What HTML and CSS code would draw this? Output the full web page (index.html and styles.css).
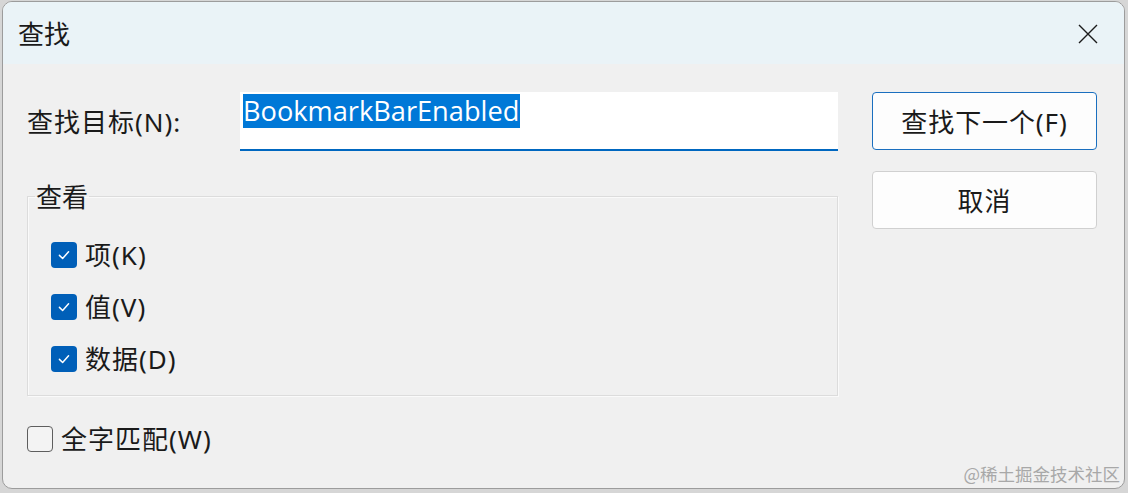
FILE: index.html
```html
<!DOCTYPE html>
<html lang="zh-CN">
<head>
<meta charset="utf-8">
<title>查找</title>
<link rel="stylesheet" href="styles.css">
</head>
<body>
<div class="window">
  <div class="titlebar">
    <span class="title">查找</span>
    <svg class="close" width="20" height="20" viewBox="0 0 20 20"><path d="M1 1 L19 19 M19 1 L1 19" stroke="#1b1b1b" stroke-width="1.4" fill="none"/></svg>
  </div>
  <div class="content">
    <div class="main">
      <div class="find-row">
        <span class="label">查找目标(N):</span>
        <div class="input"><span class="sel">BookmarkBarEnabled</span></div>
      </div>
      <fieldset class="group">
        <legend class="legend">查看</legend>
        <div class="check-row"><span class="box checked"><svg width="14" height="14" viewBox="0 0 14 14"><path d="M3 7.3 L5.8 10 L11 4.2" stroke="#fff" stroke-width="1.3" fill="none" stroke-linecap="round" stroke-linejoin="round"/></svg></span><span class="text">项(K)</span></div>
        <div class="check-row"><span class="box checked"><svg width="14" height="14" viewBox="0 0 14 14"><path d="M3 7.3 L5.8 10 L11 4.2" stroke="#fff" stroke-width="1.3" fill="none" stroke-linecap="round" stroke-linejoin="round"/></svg></span><span class="text">值(V)</span></div>
        <div class="check-row"><span class="box checked"><svg width="14" height="14" viewBox="0 0 14 14"><path d="M3 7.3 L5.8 10 L11 4.2" stroke="#fff" stroke-width="1.3" fill="none" stroke-linecap="round" stroke-linejoin="round"/></svg></span><span class="text">数据(D)</span></div>
      </fieldset>
      <div class="check-row whole"><span class="box"></span><span class="text">全字匹配(W)</span></div>
    </div>
    <div class="buttons">
      <div class="btn primary">查找下一个(F)</div>
      <div class="btn">取消</div>
    </div>
  </div>
  <div class="watermark">@稀土掘金技术社区</div>
</div>
</body>
</html>
```

FILE: styles.css
```css
* { box-sizing: border-box; }
html, body { margin: 0; height: 100%; }
body {
  background: #d6d6d6;
  padding: 1px 3px 4px 2px;
  font-family: "Noto Sans", "Noto Sans CJK SC", sans-serif;
  color: #1a1a1a;
}
.window {
  position: relative;
  height: 488px;
  border: 1px solid #9c9c9c;
  border-radius: 10px;
  background: #f0f0f0;
  overflow: hidden;
  display: flex;
  flex-direction: column;
}
.titlebar {
  height: 62px;
  background: #eaf3f7;
  display: flex;
  align-items: center;
  justify-content: space-between;
  padding: 0 26px 0 15px;
}
.title {
  font-size: 26px;
  line-height: 30px;
  font-family: "Noto Sans CJK SC", sans-serif;
}
.close { display: block; margin-top: 2px; }
.content {
  display: flex;
  padding: 28px 26px 0 24px;
  gap: 34px;
}
.main { width: 811px; display: flex; flex-direction: column; }
.find-row { display: flex; align-items: center; }
.label {
  width: 213px;
  font-size: 26px;
  letter-spacing: 1px;
  font-family: "Noto Sans", "Noto Sans CJK SC", sans-serif;
  margin-top: -2px;
}
.input {
  width: 598px;
  height: 59px;
  background: #fff;
  border-bottom: 2px solid #0067c0;
  padding: 2px 0 0 3px;
}
.sel {
  display: inline-block;
  background: #0078d7;
  color: #fff;
  font-size: 27.2px;
  line-height: 34px;
  height: 34px;
  font-family: "Open Sans", "Noto Sans", sans-serif;
  letter-spacing: 0;
  padding-right: 1px;
}
.group {
  margin: 30px 0 0 0;
  padding: 18px 0 0 23px;
  height: 215px;
  border: 1px solid #dcdcdc;
  box-shadow: inset 1px 1px 0 #fafafa, 1px 1px 0 #fafafa;
  min-width: 0;
}
.legend {
  font-size: 26px;
  font-family: "Noto Sans CJK SC", sans-serif;
  padding: 0 1px;
  margin-left: -16px;
  line-height: 30px;
}
.check-row {
  display: flex;
  align-items: center;
  height: 52px;
}
.box {
  width: 26px;
  height: 26px;
  border-radius: 4px;
  border: 1.5px solid #5e5e5e;
  background: #f3f3f3;
  display: flex;
  align-items: center;
  justify-content: center;
  flex: none;
}
.box.checked {
  background: #005fb8;
  border: none;
}
.box svg { width: 16px; height: 16px; }
.check-row .text {
  margin-left: 8px;
  font-size: 26px;
  letter-spacing: 1px;
  font-family: "Noto Sans", "Noto Sans CJK SC", sans-serif;
  line-height: 30px;
}
.whole { margin-top: 17px; }
.buttons { display: flex; flex-direction: column; gap: 21px; }
.btn {
  width: 225px;
  height: 58px;
  border: 1px solid #d0d0d0;
  border-radius: 4px;
  background: #fdfdfd;
  display: flex;
  align-items: center;
  justify-content: center;
  font-size: 26px;
  letter-spacing: 0.9px;
  font-family: "Noto Sans", "Noto Sans CJK SC", sans-serif;
}
.btn.primary { border-color: #1a6fbf; }
.watermark {
  position: absolute;
  right: 4px;
  bottom: 2px;
  font-size: 17.5px;
  color: #a8a8a8;
  font-family: "Noto Sans CJK SC", sans-serif;
}
```
